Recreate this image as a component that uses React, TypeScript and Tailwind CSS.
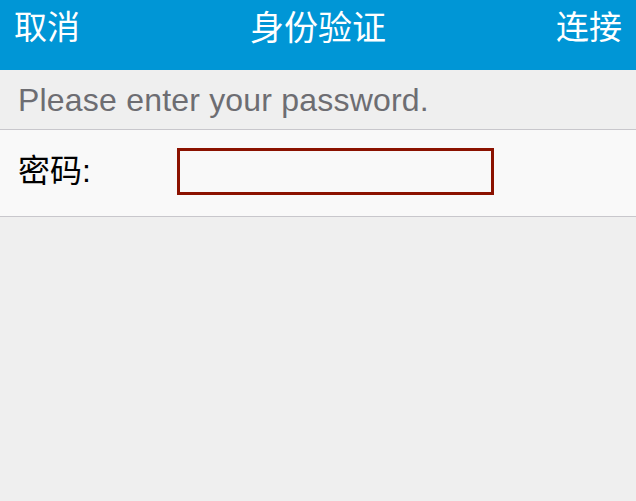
export default function App() {
  const cjk = { fontFamily: '"Liberation Sans", "Noto Sans CJK SC", sans-serif' };
  return (
    <div className="w-[636px] h-[501px] bg-[#efefef] flex flex-col overflow-hidden" style={cjk}>
      <div className="h-[70px] bg-[#0096d6] grid grid-cols-[1fr_auto_1fr] items-start px-[14px] pt-[6px] text-white">
        <span className="text-[33px] leading-[44px] justify-self-start">取消</span>
        <span className="text-[34px] leading-[44px]">身份验证</span>
        <span className="text-[33px] leading-[44px] justify-self-end">连接</span>
      </div>
      <div className="h-[60px] flex items-center px-[18px] border-b border-[#c8c7cc]">
        <span className="text-[32px] text-[#6d6d72] leading-none tracking-[0.2px]">Please enter your password.</span>
      </div>
      <div className="h-[87px] bg-[#f9f9f9] border-b border-[#c8c7cc] flex items-center px-[18px] pb-[4px]">
        <span className="text-[32px] text-black w-[159px] leading-none">密码:</span>
        <div className="w-[317px] h-[47px] border-[3px] border-[#8b1200] bg-[#f9f9f9]" />
      </div>
    </div>
  );
}
